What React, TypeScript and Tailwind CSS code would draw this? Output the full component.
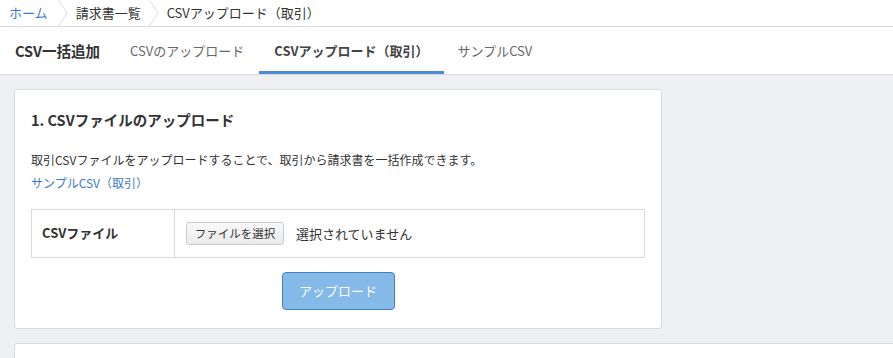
const font = { fontFamily: '"Noto Sans CJK JP", "Liberation Sans", sans-serif' };

function Chevron() {
  return (
    <svg className="h-[26px] w-[10px] shrink-0" viewBox="0 0 10 26" fill="none">
      <polyline points="0.5,0 9,13 0.5,26" stroke="#dcdcdc" strokeWidth="1" />
    </svg>
  );
}

export default function App() {
  return (
    <div className="min-h-screen bg-[#eef0f4] text-[#333]" style={font}>
      {/* Breadcrumb */}
      <div className="flex h-[27px] items-center border-b border-[#d9d9d9] bg-white text-[13px]">
        <a href="#" className="pl-[9px] pr-[10px] text-[#3a7bc8]">ホーム</a>
        <Chevron />
        <span className="pl-[8px] pr-[8px]">請求書一覧</span>
        <Chevron />
        <span className="pl-[8px]">CSVアップロード（取引）</span>
      </div>

      {/* Tabs */}
      <div className="flex h-[48px] items-stretch border-b border-[#d9d9d9] bg-white">
        <div className="flex items-center px-[15px] text-[14.5px] font-bold text-[#333]">CSV一括追加</div>
        <a href="#" className="flex items-center px-[15px] text-[13px] text-[#666]">CSVのアップロード</a>
        <a href="#" className="flex items-center border-b-[3px] border-[#4a8ad8] px-[15px] pt-[3px] text-[13px] font-bold text-[#444]">
          CSVアップロード（取引）
        </a>
        <a href="#" className="flex items-center px-[14px] text-[13px] text-[#666]">サンプルCSV</a>
      </div>

      {/* Content */}
      <div className="flex flex-col gap-[14px] overflow-hidden pl-[14px] pt-[14px]">
        <div className="w-[648px] rounded-[3px] border border-[#d8dadf] bg-white px-4 pb-[18px] pt-[20px]">
          <h2 className="text-[14.5px] font-bold leading-[20px] text-[#333]">1. CSVファイルのアップロード</h2>
          <p className="mt-[18px] text-[12px] leading-[23px]">
            取引CSVファイルをアップロードすることで、取引から請求書を一括作成できます。
          </p>
          <a href="#" className="block text-[12px] leading-[23px] text-[#3a7bc8]">サンプルCSV（取引）</a>

          <div className="mt-[15px] flex h-[49px] border border-[#d9d9d9]">
            <div className="flex w-[143px] items-center border-r border-[#d9d9d9] pb-[2px] pl-[10px] text-[13px] font-bold">
              CSVファイル
            </div>
            <div className="flex items-center gap-[12px] pl-[11px] text-[13px]">
              <button className="h-[23px] w-[98px] rounded-[3px] border border-[#c8cbd0] bg-gradient-to-b from-[#f8f8f8] to-[#ebebeb] text-[11.5px] text-[#333]">
                ファイルを選択
              </button>
              <span>選択されていません</span>
            </div>
          </div>

          <div className="mt-[14px] flex justify-center">
            <button className="h-[38px] w-[113px] rounded-[4px] border border-[#3f82c2] bg-[#85b9e8] text-[13px] text-white">
              アップロード
            </button>
          </div>
        </div>

        <div className="h-[15px] w-[1000px] rounded-t-[3px] border-l border-r border-t border-[#d8dadf] bg-white" />
      </div>
    </div>
  );
}
